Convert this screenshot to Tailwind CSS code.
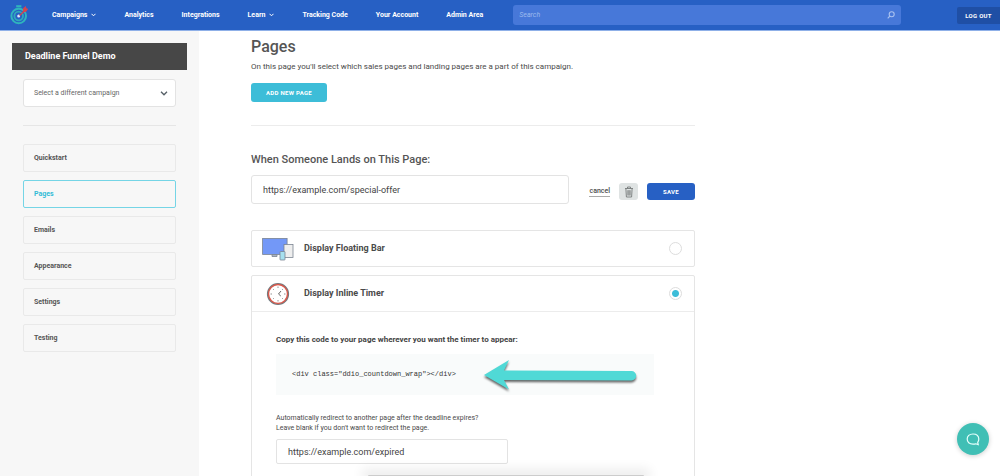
<!DOCTYPE html>
<html lang="en">
<head>
<meta charset="utf-8">
<meta name="viewport" content="width=device-width, initial-scale=1">
<title>Deadline Funnel – Pages</title>
<script src="https://cdn.jsdelivr.net/npm/@tailwindcss/browser@4"></script>
</head>
<body class="flex h-screen flex-col overflow-hidden bg-white font-['Roboto',sans-serif] text-[#4a4a4a]">
<header class="flex h-[31px] shrink-0 items-center border-b border-[#8fb0e8] bg-[#2760c4] pl-2 text-white">
  <a href="#" aria-label="Deadline Funnel" class="mr-6 block w-5">
    <svg viewBox="0 0 20 22" class="h-[22px] w-5" fill="none">
      <path d="M8.200 2.300h5.200" stroke="#2fb5bd" stroke-width="2.200"/>
      <circle cx="10.700" cy="12" r="7.300" stroke="#2fb5bd" stroke-width="2"/>
      <circle cx="10.700" cy="12" r="4.300" stroke="#2fa9bb" stroke-width="1.800"/>
      <circle cx="10.700" cy="12" r="1.500" fill="#dbe8ff"/>
      <path d="M11.500 11.500 18 5.500" stroke="#c94756" stroke-width="1.600"/>
      <path d="m14.800 8.300.3-4 2.700-2.300.6 2.300 2 .5-2.300 3Z" fill="#d34650"/>
    </svg>
  </a>
  <nav class="flex items-center gap-7 text-[7px] leading-3 font-bold whitespace-nowrap" aria-label="Main">
    <a href="#" class="flex items-center gap-1">Campaigns <svg viewBox="0 0 5 4" class="h-1 w-[5px]" fill="none" stroke="#fff"><path d="m.5.8 2 2 2-2"/></svg></a>
    <a href="#">Analytics</a>
    <a href="#">Integrations</a>
    <a href="#" class="flex items-center gap-1">Learn <svg viewBox="0 0 5 4" class="h-1 w-[5px]" fill="none" stroke="#fff"><path d="m.5.8 2 2 2-2"/></svg></a>
    <a href="#">Tracking Code</a>
    <a href="#">Your Account</a>
    <a href="#">Admin Area</a>
  </nav>
  <form class="mr-14 ml-[30px] flex h-5 flex-1 items-center rounded-[3px] bg-[#4778d9] px-[6px]">
    <input type="search" aria-label="Search" placeholder="Search" class="min-w-0 flex-1 bg-transparent text-[7px] italic outline-none placeholder:text-[#9bb8ee]">
    <button type="button" aria-label="Submit search" class="block"><svg viewBox="0 0 8 8" class="size-2" fill="none" stroke="#a9c1f0" stroke-width="1.100"><circle cx="4.700" cy="3.200" r="2.500"/><path d="M2.900 5 .7 7.300"/></svg></button>
  </form>
  <button type="button" class="h-[17px] w-[43px] rounded-l-[2px] bg-[#1f4fa5] text-[6px] font-bold tracking-wider">LOG OUT</button>
</header>

<div class="flex min-h-0 flex-1">
  <aside class="w-[199px] shrink-0 bg-[#f7f7f7] px-3 pt-3">
    <h2 class="flex h-[27px] items-center bg-[#474747] px-[13px] text-[9px] font-bold text-white">Deadline Funnel Demo</h2>
    <div class="px-[11px]">
      <div class="relative mt-[9px]">
        <select aria-label="Campaign" class="block h-7 w-full appearance-none rounded-[3px] border border-[#e3e3e3] bg-white px-[10px] text-[7px] text-[#666]"><option>Select a different campaign</option></select>
        <svg viewBox="0 0 8 5" class="pointer-events-none absolute top-3 right-2 h-[5px] w-2" fill="none" stroke="#555f66" stroke-width="1.300"><path d="m1 .8 3 3 3-3"/></svg>
      </div>
      <hr class="mt-[18px] border-[#e6e6e6]">
      <nav class="mt-[18px] grid gap-2 text-[7px] font-bold text-[#555]" aria-label="Campaign">
        <a href="#" class="flex h-7 items-center rounded-[2px] border border-[#e9e9e9] px-[10px]">Quickstart</a>
        <a href="#" aria-current="page" class="flex h-7 items-center rounded-[2px] border border-[#75d5e6] px-[10px] text-[#34bcd6]">Pages</a>
        <a href="#" class="flex h-7 items-center rounded-[2px] border border-[#e9e9e9] px-[10px]">Emails</a>
        <a href="#" class="flex h-7 items-center rounded-[2px] border border-[#e9e9e9] px-[10px]">Appearance</a>
        <a href="#" class="flex h-7 items-center rounded-[2px] border border-[#e9e9e9] px-[10px]">Settings</a>
        <a href="#" class="flex h-7 items-center rounded-[2px] border border-[#e9e9e9] px-[10px]">Testing</a>
      </nav>
    </div>
  </aside>

  <main class="min-h-0 min-w-0 flex-1 overflow-hidden pt-1 pl-[52px]">
    <div class="max-w-[444px]">
      <h1 class="text-[16px] leading-6 font-medium text-[#555]">Pages</h1>
      <p class="text-[8px] leading-4 whitespace-nowrap">On this page you'll select which sales pages and landing pages are a part of this campaign.</p>
      <button type="button" class="mt-2 block h-[19px] w-[76px] rounded-[3px] bg-[#3dbdd8] text-[6px] font-bold tracking-wider text-white">ADD NEW PAGE</button>
      <hr class="mt-[23px] border-[#ececec]">
      <h2 class="mt-[26px] text-[11px] leading-4 font-medium text-[#555]"><label for="page-url">When Someone Lands on This Page:</label></h2>
      <div class="mt-[7px] flex items-center">
        <input id="page-url" type="text" value="https://example.com/special-offer" class="h-[29px] min-w-0 flex-1 rounded-[3px] border border-[#e3e3e3] px-[11px] text-[9px] text-[#444] outline-none">
        <div class="ml-5 flex shrink-0 items-center gap-[9px] pt-1">
          <a href="#" class="border-b border-[#aaa] text-[7px] leading-[10px] font-medium">cancel</a>
          <button type="button" aria-label="Delete page" class="flex h-[17px] w-[19px] items-center justify-center rounded-[3px] bg-[#dfe3e3]">
            <svg viewBox="0 0 10 12" class="h-3 w-[10px]" fill="none" stroke="#767b7b" stroke-width=".9"><path d="M1 2.500h8M3.500 2.300V1h3v1.300M1.900 2.700l.5 8.300h5.200l.5-8.300M3.900 4.200v5.300M5 4.200v5.300M6.100 4.200v5.300"/></svg>
          </button>
          <button type="button" class="h-[17px] w-12 rounded-[3px] bg-[#2760c4] text-[6px] font-bold tracking-wider text-white">SAVE</button>
        </div>
      </div>

      <section class="mt-[26px] rounded-[2px] border border-[#e5e5e5]">
        <label class="flex h-[35px] items-center pr-3 pl-[10px]">
          <svg viewBox="0 0 34 24" class="h-6 w-[34px]" stroke="#7b8492" stroke-width=".8">
            <rect x=".6" y="1.400" width="24.500" height="16" fill="#7398f7"/>
            <path d="M10 17.500h5v2h-5z" fill="#a9b3c1"/>
            <rect x="22" y="7.500" width="9" height="13" fill="#eee"/>
            <rect x="18" y="14.500" width="5" height="8.500" rx=".6" fill="#a6e0ef"/>
          </svg>
          <span class="ml-2 flex-1 text-[9px] font-bold">Display Floating Bar</span>
          <input type="radio" name="display" class="size-[13px] appearance-none rounded-full border border-[#ddd] bg-white">
        </label>
      </section>

      <section class="mt-2 rounded-[2px] border border-[#e5e5e5]">
        <label class="flex h-9 items-center border-b border-[#ececec] pr-3 pl-[10px]">
          <svg viewBox="0 0 34 24" class="h-6 w-[34px]" fill="none">
            <circle cx="16" cy="12" r="10.300" fill="#fff" stroke="#717b80" stroke-width="1.600"/>
            <circle cx="16" cy="12" r="9.500" stroke="#d9594c" stroke-width="1.400"/>
            <path d="M16 4.500V6M16 18v1.500M8.500 12H10M22 12h1.500M11 7l.8.8M21 7l-.8.8M11 17l.8-.8M21 17l-.8-.8" stroke="#777" stroke-width=".8"/>
            <path d="m19 9-2.500 3 2.300 2" stroke="#555" stroke-width=".9"/>
          </svg>
          <span class="ml-2 flex-1 text-[9px] font-bold">Display Inline Timer</span>
          <input type="radio" name="display" checked class="size-[13px] appearance-none rounded-full border border-[#ddd] bg-[radial-gradient(circle,#3dbdd8_3px,white_4px)]">
        </label>
        <div class="px-6 pt-[22px] pb-10">
          <h3 class="text-[8px] leading-3 font-bold text-[#444]">Copy this code to your page wherever you want the timer to appear:</h3>
          <div class="relative mt-2 mr-4 flex h-[41px] items-center bg-[#f9fbfb] px-4">
            <code class="font-['Liberation_Mono',monospace] text-[7px] text-[#333]">&lt;div class="ddio_countdown_wrap"&gt;&lt;/div&gt;</code>
            <svg viewBox="0 0 156 36" class="absolute top-1 left-[207px] h-9 w-[156px] drop-shadow-[0_2px_1px_#00000099]" fill="#50d9d6" aria-hidden="true">
              <path d="M1 17 26 2 21 12.500 148.500 13a4.700 4.700 0 0 1 0 9.400L21 22 26 31.500Z"/>
            </svg>
          </div>
          <label for="redirect-url" class="mt-[18px] block text-[7px] leading-[10px]">Automatically redirect to another page after the deadline expires?<br>Leave blank if you don't want to redirect the page.</label>
          <input id="redirect-url" type="text" value="https://example.com/expired" class="mt-[6px] block h-[25px] w-[232px] rounded-[2px] border border-[#e3e3e3] px-[11px] text-[9px] text-[#444] outline-none">
        </div>
      </section>
    </div>
  </main>
</div>

<div class="fixed bottom-0 left-1/2 h-px w-[276px] -translate-x-[132px] rounded-t bg-[#cccccc] shadow-[0_0_12px_6px_#00000014]"></div>
<button type="button" aria-label="Open chat" class="fixed right-[11px] bottom-[21px] flex size-8 items-center justify-center rounded-full bg-[#40bfb5] shadow-[0_1px_5px_#00000033]">
  <svg viewBox="0 0 14 13" class="h-[13px] w-[14px]" fill="none" stroke="#e5fffc" stroke-width="1.200" stroke-linejoin="round"><path d="M12.300 11.800 9.800 10.800C9 11 8 11.100 7 11.100 3.300 11.100 1.200 9.200 1.200 6.100S3.300 1 7 1s5.800 2 5.800 5.100c0 1.300-.4 2.400-1.100 3.200Z"/></svg>
</button>
</body>
</html>
